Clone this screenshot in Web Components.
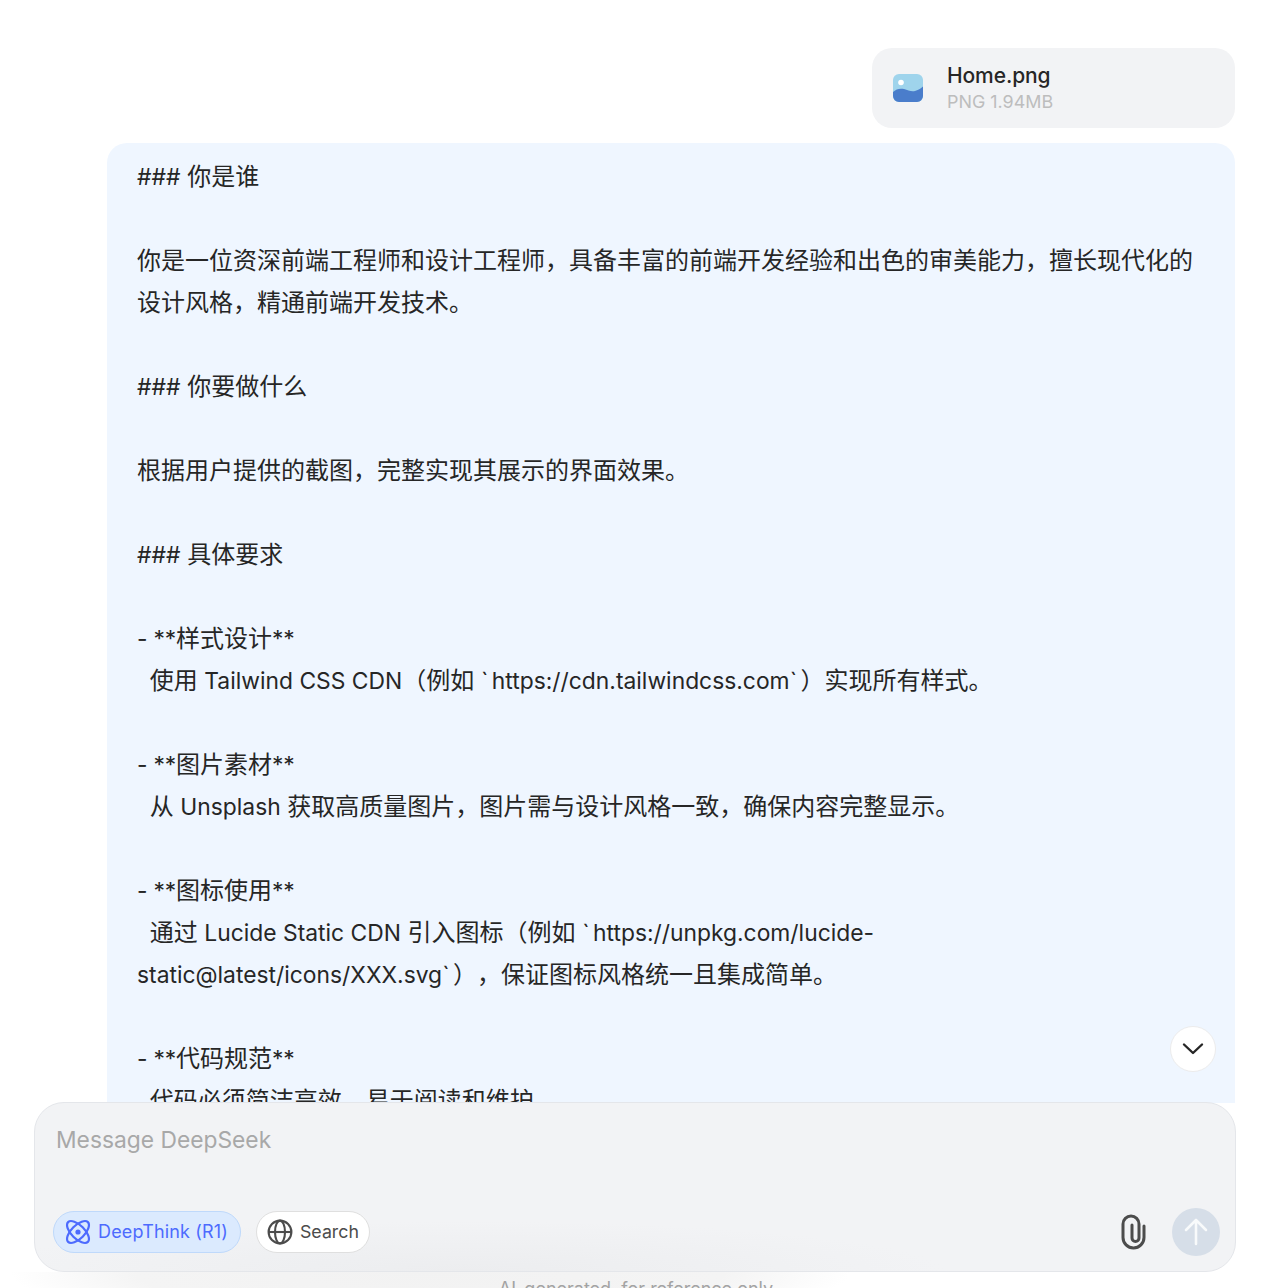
<!DOCTYPE html>
<html lang="zh">
<head>
<meta charset="utf-8">
<title>DeepSeek</title>
<style>
    html, body { margin: 0; height: 100%; background: #fff; }
    body { overflow: hidden; font-family: Inter, "Noto Sans CJK SC", sans-serif; }
</style>
</head>
<body>
<chat-page>
    <file-card slot="thread" name="Home.png" meta="PNG 1.94MB"></file-card>
    <user-bubble slot="thread"><span>###</span> 你是谁

你是一位资深前端工程师和设计工程师，具备丰富的前端开发经验和出色的审美能力，擅长现代化的设计风格，精通前端开发技术。

<span>###</span> 你要做什么

根据用户提供的截图，完整实现其展示的界面效果。

<span>###</span> 具体要求

<span class="ast">- **</span>样式设计<span class="ast">**</span>
<span>  </span>使用<span> Tailwind CSS CDN</span>（例如 <span class="tick">`</span><span>https://cdn.tailwindcss.com</span><span class="tick">`</span>）实现所有样式。

<span class="ast">- **</span>图片素材<span class="ast">**</span>
<span>  </span>从<span> Unsplash </span>获取高质量图片，图片需与设计风格一致，确保内容完整显示。

<span class="ast">- **</span>图标使用<span class="ast">**</span>
<span>  </span>通过<span> Lucide Static CDN </span>引入图标（例如 <span class="tick">`</span><span>https://unpkg.com/lucide-</span>
<span>static@latest/icons/XXX.svg</span><span class="tick">`</span>），保证图标风格统一且集成简单。

<span class="ast">- **</span>代码规范<span class="ast">**</span>
<span>  </span>代码必须简洁高效，易于阅读和维护。</user-bubble>
    <chat-composer slot="composer" placeholder="Message DeepSeek"></chat-composer>
</chat-page>

<script>
class ChatPage extends HTMLElement {
    constructor() {
        super();
        this.attachShadow({ mode: 'open' });
        this.shadowRoot.innerHTML = `
            <style>
                :host {
                    display: flex;
                    flex-direction: column;
                    height: 1288px;
                    overflow: hidden;
                }
                .thread {
                    flex: 1;
                    min-height: 0;
                    overflow: hidden;
                    position: relative;
                    padding: 48px 37px 0 107px;
                    display: flex;
                    flex-direction: column;
                    gap: 15px;
                }
                .down {
                    position: absolute;
                    right: 56px;
                    bottom: 31px;
                    width: 46px;
                    height: 46px;
                    box-sizing: border-box;
                    border-radius: 50%;
                    background: #fff;
                    border: 1px solid #ececec;
                    display: flex;
                    align-items: center;
                    justify-content: center;
                }
                .composer {
                    margin: 0 36px 0 34px;
                }
                .footer {
                    height: 16px;
                    overflow: hidden;
                    text-align: center;
                    font-size: 18px;
                    line-height: 24px;
                    padding-top: 5px;
                    box-sizing: border-box;
                    color: #a3a3a3;
                    background: radial-gradient(ellipse 420px 60px at 430px 0, #f2f2f2 0%, #f4f4f4 70%, #ffffff 100%);
                }
            </style>
            <div class="thread">
                <slot name="thread"></slot>
                <div class="down">
                    <svg width="24" height="24" viewBox="0 0 24 24" fill="none" stroke="#262626" stroke-width="2.4" stroke-linecap="round" stroke-linejoin="round"><path d="M3 7.5 12 16l9-8.5"/></svg>
                </div>
            </div>
            <div class="composer"><slot name="composer"></slot></div>
            <div class="footer">AI-generated, for reference only</div>
        `;
    }
}

class FileCard extends HTMLElement {
    constructor() {
        super();
        this.attachShadow({ mode: 'open' });
        this.shadowRoot.innerHTML = `
            <style>
                :host {
                    display: flex;
                    align-self: flex-end;
                    align-items: center;
                    box-sizing: border-box;
                    width: 363px;
                    height: 80px;
                    padding: 0 20px;
                    gap: 24px;
                    flex: none;
                    border-radius: 20px;
                    background: #f2f3f5;
                }
                svg { flex: none; margin-left: 1px; }
                .info { margin-top: 2px; }
                .name { font-size: 21px; line-height: 26px; color: #262626; font-weight: 500; letter-spacing: -.1px; }
                .meta { font-size: 17.9px; line-height: 26px; color: #bdbdbd; }
            </style>
            <svg width="30" height="28" viewBox="0 0 30 28">
                <rect width="30" height="28" rx="6" fill="#9fd4ec"/>
                <circle cx="8" cy="8.5" r="2.8" fill="#fff"/>
                <path d="M0 18c3-3 7-4 11-3s7 3 11 2 6-3 8-4.5V22a6 6 0 0 1-6 6H6a6 6 0 0 1-6-6z" fill="#4a7dcb"/>
            </svg>
            <div class="info">
                <div class="name"></div>
                <div class="meta"></div>
            </div>
        `;
    }

    connectedCallback() {
        this.shadowRoot.querySelector('.name').textContent = this.getAttribute('name');
        this.shadowRoot.querySelector('.meta').textContent = this.getAttribute('meta');
    }
}

class UserBubble extends HTMLElement {
    constructor() {
        super();
        this.attachShadow({ mode: 'open' });
        this.shadowRoot.innerHTML = `
            <style>
                :host {
                    display: block;
                    flex: none;
                    padding: 13px 30px 40px;
                    border-radius: 20px;
                    background: #eff6ff;
                    color: #262626;
                }
                .text {
                    font-size: 24px;
                    line-height: 42px;
                    white-space: pre-wrap;
                    text-spacing-trim: space-all;
                }
                /* latin runs sit a bit smaller than the CJK around them */
                ::slotted(span) { font-size: 22.85px; }
                ::slotted(span.ast) { letter-spacing: -.2px; }
                ::slotted(span.tick) { letter-spacing: 3.5px; }
            </style>
            <div class="text"><slot></slot></div>
        `;
    }
}

class ModeChip extends HTMLElement {
    constructor() {
        super();
        this.attachShadow({ mode: 'open' });
        this.shadowRoot.innerHTML = `
            <style>
                :host {
                    display: inline-flex;
                    align-items: center;
                    box-sizing: border-box;
                    height: 42px;
                    gap: 7px;
                    padding: 0 10px;
                    border-radius: 21px;
                    border: 1px solid #dfdfdf;
                    background: #fff;
                    color: #4c4c4c;
                    font-size: 17.8px;
                }
                :host([active]) {
                    padding: 0 12px 0 11px;
                    font-size: 18px;
                    letter-spacing: .15px;
                    background: #dbeafe;
                    border-color: #bfd9fb;
                    color: #4d6bfe;
                }
                .label { margin-top: -2px; }
            </style>
            <slot name="icon"></slot>
            <span class="label"><slot></slot></span>
        `;
    }
}

class ChatComposer extends HTMLElement {
    constructor() {
        super();
        this.attachShadow({ mode: 'open' });
        this.shadowRoot.innerHTML = `
            <style>
                :host {
                    display: block;
                    box-sizing: border-box;
                    height: 170px;
                    margin-top: -1px;
                    padding: 23px 15px 15px 18px;
                    border: 1px solid #e4e6ea;
                    border-radius: 30px;
                    background:
                        radial-gradient(ellipse 480px 50px at 430px 100%, #ecedef 0%, rgba(236,237,239,0) 100%),
                        #f2f3f5;
                    position: relative;
                }
                .wrap { height: 100%; display: flex; flex-direction: column; }
                .placeholder {
                    flex: 1;
                    padding-left: 3px;
                    color: #a8a8a8;
                    font-size: 22.8px;
                    line-height: 28px;
                }
                .bar { display: flex; align-items: center; gap: 15px; }
                .spacer { flex: 1; }
                .send {
                    width: 48px;
                    height: 48px;
                    border-radius: 50%;
                    background: #d6dee8;
                    display: flex;
                    align-items: center;
                    justify-content: center;
                }
                .clip { margin-right: 11px; display: flex; }
            </style>
            <div class="wrap">
                <div class="placeholder"></div>
                <div class="bar">
                    <mode-chip active>
                        <svg slot="icon" width="26" height="26" viewBox="0 0 26 26" fill="none" stroke="#4d6bfe" stroke-width="2.2">
                            <ellipse cx="13" cy="13" rx="14" ry="6.6" transform="rotate(45 13 13)"/>
                            <ellipse cx="13" cy="13" rx="14" ry="6.6" transform="rotate(-45 13 13)"/>
                            <circle cx="13" cy="13" r="2.6" fill="#4d6bfe" stroke="none"/>
                        </svg>
                        DeepThink (R1)
                    </mode-chip>
                    <mode-chip>
                        <svg slot="icon" width="26" height="26" viewBox="0 0 26 26" fill="none" stroke="#4c4c4c" stroke-width="2.1">
                            <circle cx="13" cy="13" r="11.4"/>
                            <ellipse cx="13" cy="13" rx="5" ry="11.4"/>
                            <path d="M1.6 13h22.8"/>
                        </svg>
                        Search
                    </mode-chip>
                    <div class="spacer"></div>
                    <div class="clip">
                        <svg width="26" height="36" viewBox="0 0 26 36" fill="none" stroke="#4c4c4c" stroke-width="3" stroke-linecap="round" stroke-linejoin="round">
                            <path d="M24 12v11.5a10.5 10.5 0 0 1-21 0V10a8 8 0 0 1 16 0v14a3.5 3.5 0 0 1-7 0V11"/>
                        </svg>
                    </div>
                    <div class="send">
                        <svg width="24" height="30" viewBox="0 0 24 30" fill="none" stroke="#fff" stroke-width="2.6" stroke-linecap="round" stroke-linejoin="round" opacity=".85">
                            <path d="M12 27V4M2 13l10-10 10 10"/>
                        </svg>
                    </div>
                </div>
            </div>
        `;
    }

    connectedCallback() {
        this.shadowRoot.querySelector('.placeholder').textContent = this.getAttribute('placeholder');
    }
}

window.customElements.define('chat-page', ChatPage);
window.customElements.define('file-card', FileCard);
window.customElements.define('user-bubble', UserBubble);
window.customElements.define('mode-chip', ModeChip);
window.customElements.define('chat-composer', ChatComposer);
</script>
</body>
</html>
